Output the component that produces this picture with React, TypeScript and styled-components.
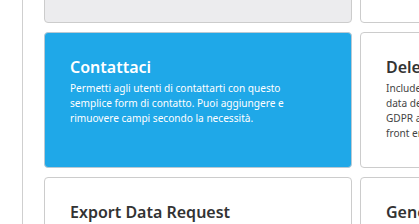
import { FC } from 'react';
import styled, { createGlobalStyle } from 'styled-components';

const GlobalStyle = createGlobalStyle`
  html, body {
    margin: 0;
    padding: 0;
    background: #ffffff;
    overflow: hidden;
  }
  body {
    font-family: 'Noto Sans', 'Open Sans', sans-serif;
  }
`;

const StyledPage = styled.div`
  width: 419px;
  height: 224px;
  overflow: hidden;
  padding-left: 22px;
  box-sizing: border-box;
`;

const StyledPanel = styled.div`
  display: flow-root;
  border-left: 1px solid #cfcfcf;
  padding-left: 21px;
  height: 100%;
`;

const StyledGrid = styled.div`
  display: grid;
  grid-template-columns: 308px 308px;
  grid-auto-rows: 136px;
  column-gap: 8px;
  row-gap: 9px;
  margin-top: -113px;
`;

const StyledCard = styled.div<{ $variant?: 'default' | 'active' | 'muted' }>`
  box-sizing: border-box;
  border: 1px solid
    ${(p) => (p.$variant === 'active' ? '#b9c9d3' : '#cccccc')};
  border-radius: 4px;
  background: ${(p) =>
    p.$variant === 'active' ? '#1fa8e8' : p.$variant === 'muted' ? '#ececee' : '#ffffff'};
  color: ${(p) => (p.$variant === 'active' ? '#ffffff' : '#333333')};
  padding: 24px 25px 0 25px;
  overflow: hidden;
`;

const StyledTitle = styled.div`
  font-size: 16px;
  font-weight: 600;
  line-height: 20px;
  margin-bottom: 4px;
  white-space: nowrap;
`;

const StyledText = styled.div<{ $active?: boolean }>`
  font-size: 10.1px;
  line-height: 15px;
  color: ${(p) => (p.$active ? '#ffffff' : '#444444')};
  white-space: nowrap;
`;

type Card = { title?: string; lines: string[]; variant: 'default' | 'active' | 'muted' };

const cards: Card[] = [
  { lines: [], variant: 'muted' },
  { lines: [], variant: 'default' },
  {
    title: 'Contattaci',
    lines: [
      'Permetti agli utenti di contattarti con questo',
      'semplice form di contatto. Puoi aggiungere e',
      'rimuovere campi secondo la necessità.',
    ],
    variant: 'active',
  },
  {
    title: 'Delete Data Request',
    lines: [
      'Includes a form to let users request',
      'data deletion, useful to comply with',
      'GDPR and similar rules on the',
      'front end of the site.',
    ],
    variant: 'default',
  },
  { title: 'Export Data Request', lines: [], variant: 'default' },
  { title: 'Generic Form', lines: [], variant: 'default' },
];

const App: FC = () => {
  return (
    <>
      <GlobalStyle />
      <StyledPage>
        <StyledPanel>
          <StyledGrid>
            {cards.map((c, i) => (
              <StyledCard key={i} $variant={c.variant}>
                {c.title && <StyledTitle>{c.title}</StyledTitle>}
                {c.lines.map((l, j) => (
                  <StyledText key={j} $active={c.variant === 'active'}>
                    {l}
                  </StyledText>
                ))}
              </StyledCard>
            ))}
          </StyledGrid>
        </StyledPanel>
      </StyledPage>
    </>
  );
};

export default App;
